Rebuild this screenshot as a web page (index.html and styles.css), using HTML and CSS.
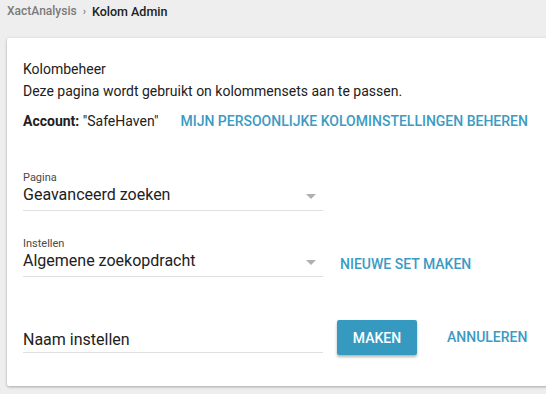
FILE: index.html
```html
<!DOCTYPE html>
<html lang="nl">
  <head>
    <meta charset="UTF-8" />
    <meta name="viewport" content="width=device-width, initial-scale=1.0" />
    <title>Kolom Admin</title>
    <link rel="stylesheet" href="styles.css">
  </head>
  <body>
    <nav class="crumbs">
      <span class="crumb-root">XactAnalysis</span>
      <span class="crumb-sep">›</span>
      <span class="crumb-current">Kolom Admin</span>
    </nav>

    <main class="card">
      <h1 class="title">Kolombeheer</h1>
      <p class="intro">Deze pagina wordt gebruikt on kolommensets aan te passen.</p>
      <div class="account-row">
        <span><b>Account:</b> "SafeHaven"</span>
        <a class="link" href="#">Mijn persoonlijke kolominstellingen beheren</a>
      </div>

      <div class="field-row first">
        <label class="field select">
          <span class="field-label">Pagina</span>
          <span class="field-value">Geavanceerd zoeken</span>
          <span class="arrow"></span>
        </label>
      </div>

      <div class="field-row second">
        <label class="field select">
          <span class="field-label">Instellen</span>
          <span class="field-value">Algemene zoekopdracht</span>
          <span class="arrow"></span>
        </label>
        <a class="link" href="#">Nieuwe set maken</a>
      </div>

      <div class="create-row">
        <label class="field name">
          <span class="field-value">Naam instellen</span>
        </label>
        <button class="btn-primary">Maken</button>
        <a class="link cancel" href="#">Annuleren</a>
      </div>
    </main>
  </body>
</html>
```

FILE: styles.css
```css
html,
body {
  margin: 0;
  height: 100%;
  overflow: hidden;
}
body {
  background: #eeeeee;
  font-family: Roboto, "Liberation Sans", sans-serif;
  color: #212121;
  padding: 0 0 0 7px;
}
.crumbs {
  height: 38px;
  display: flex;
  align-items: center;
  gap: 6px;
  font-weight: 500;
  padding-bottom: 16px;
  box-sizing: border-box;
}
.crumb-root {
  color: #7a7a7a;
  font-size: 12px;
}
.crumb-sep {
  color: #7a7a7a;
  font-size: 11px;
}
.crumb-current {
  color: #212121;
  font-size: 12.5px;
}

.card {
  background: #fff;
  margin-right: -30px;
  height: 348px;
  box-sizing: border-box;
  padding: 21px 16px 0;
  box-shadow: 0 1px 3px rgba(0, 0, 0, 0.3);
  border-radius: 2px;
  font-size: 14px;
}
.title {
  font-size: 14px;
  font-weight: 400;
  margin: 0;
  line-height: 20px;
}
.intro {
  margin: 2px 0 0;
  line-height: 20px;
}
.account-row {
  display: flex;
  align-items: center;
  gap: 22px;
  margin-top: 10px;
  line-height: 20px;
}
.account-row b {
  font-weight: 700;
}
.link {
  color: #3b9bc3;
  text-decoration: none;
  text-transform: uppercase;
  font-weight: 500;
  font-size: 14px;
}

.field-row {
  display: flex;
  align-items: flex-end;
  gap: 17px;
}
.field-row.first {
  margin-top: 40px;
}
.field-row.second {
  margin-top: 26px;
}
.field {
  position: relative;
  display: flex;
  flex-direction: column;
  width: 300px;
  border-bottom: 1px solid #e0e0e0;
  padding-bottom: 4px;
}
.field-label {
  font-size: 11px;
  color: #4a4a4a;
  line-height: 13px;
}
.field-value {
  font-size: 16px;
  line-height: 22px;
  color: #212121;
}
.arrow {
  position: absolute;
  right: 7px;
  bottom: 11px;
  width: 0;
  height: 0;
  border-left: 5px solid transparent;
  border-right: 5px solid transparent;
  border-top: 5px solid #b0b0b0;
}
.field-row .link {
  padding-bottom: 5px;
}

.create-row {
  display: flex;
  align-items: flex-start;
  margin-top: 43px;
}
.field.name {
  margin-top: 9px;
  padding-bottom: 1px;
}
.btn-primary {
  margin-left: 14px;
  width: 80px;
  height: 35px;
  border: none;
  border-radius: 2px;
  background: #369ac0;
  color: #fff;
  font-family: inherit;
  font-size: 14px;
  font-weight: 500;
  text-transform: uppercase;
  box-shadow: 0 2px 3px rgba(0, 0, 0, 0.3);
}
.create-row .cancel {
  margin-left: 30px;
  line-height: 35px;
}
```
